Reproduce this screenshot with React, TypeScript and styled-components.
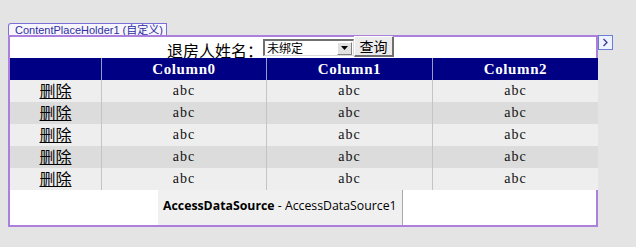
import React from "react";
import styled, { createGlobalStyle } from "styled-components";

const Global = createGlobalStyle`
  html, body { margin: 0; padding: 0; background: #e4e4e4; }
  body { font-family: "Liberation Sans", "Noto Sans CJK SC", sans-serif; }
`;

const Page = styled.div`
  width: 636px;
  height: 247px;
  padding: 23px 0 0 8px;
  box-sizing: border-box;
`;

const Tab = styled.div`
  display: flex;
  align-items: center;
  width: fit-content;
  height: 10px;
  padding: 1px 3px 0 6px;
  border: 1px solid #7a6fd6;
  border-bottom: none;
  border-top-left-radius: 3px;
  background: #f7f6ff;
  font-family: "Liberation Sans", "Noto Sans CJK SC", sans-serif;
  font-size: 11px;
  line-height: 10px;
  color: #2f2fa0;
  white-space: nowrap;
`;

const FrameRow = styled.div`
  display: flex;
  align-items: flex-start;
`;

const Frame = styled.div`
  width: 586px;
  border: 2px solid #ac7fdc;
  background: #ffffff;
  display: flex;
  flex-direction: column;
`;

const Arrow = styled.div`
  width: 15px;
  height: 15px;
  border: 1px solid #6b7fd0;
  background: #eef1ff;
  display: flex;
  align-items: center;
  justify-content: center;
  box-sizing: border-box;
`;

const SearchRow = styled.div`
  height: 21px;
  display: flex;
  align-items: flex-end;
  padding-left: 157px;
`;

const Label = styled.span`
  font-family: "Noto Sans CJK SC", sans-serif;
  font-size: 16px;
  line-height: 18px;
  color: #000;
  width: 96px;
  white-space: nowrap;
  margin-bottom: -1px;
`;

const Select = styled.div`
  align-self: flex-start;
  margin-top: 2px;
  width: 91px;
  height: 17px;
  box-sizing: border-box;
  border-top: 2px solid #707070;
  border-left: 2px solid #707070;
  border-right: 1px solid #d8d8d8;
  border-bottom: 1px solid #d8d8d8;
  background: #fff;
  display: flex;
  align-items: center;
  font-family: "Noto Sans CJK SC", sans-serif;
  font-size: 12px;
  color: #000;
`;

const SelectText = styled.span`
  flex: 1;
  padding-left: 2px;
  line-height: 14px;
`;

const DropBtn = styled.span`
  width: 15px;
  height: 13px;
  margin-right: 1px;
  background: #e0e0e0;
  border-top: 1px solid #fff;
  border-left: 1px solid #fff;
  border-right: 1px solid #808080;
  border-bottom: 1px solid #808080;
  box-sizing: border-box;
  display: flex;
  align-items: center;
  justify-content: center;
`;

const Button = styled.div`
  align-self: flex-start;
  margin-top: -1px;
  width: 40px;
  height: 21px;
  box-sizing: border-box;
  background: #ececec;
  border-top: 1px solid #ffffff;
  border-left: 1px solid #ffffff;
  border-right: 2px solid #707070;
  border-bottom: 2px solid #707070;
  display: flex;
  align-items: center;
  justify-content: center;
  font-family: "Noto Sans CJK SC", sans-serif;
  font-size: 14px;
  color: #000;
`;

const Table = styled.table`
  border-collapse: collapse;
  width: 585px;
  table-layout: fixed;
`;

const Th = styled.th<{ $w: number }>`
  width: ${(p) => p.$w}px;
  height: 22px;
  padding: 0;
  background: #000084;
  color: #fff;
  font-family: "Liberation Serif", serif;
  font-weight: bold;
  font-size: 15px;
  letter-spacing: 0.6px;
  text-align: center;
  border-left: 1px solid #9a9ac8;
  &:first-child { border-left: none; }
`;

const Tr = styled.tr<{ $alt: boolean }>`
  background: ${(p) => (p.$alt ? "#dcdcdc" : "#eeeeee")};
`;

const Td = styled.td`
  height: 22px;
  padding: 0;
  text-align: center;
  font-family: "Liberation Serif", serif;
  font-weight: normal;
  font-size: 14px;
  letter-spacing: 1px;
  color: #111;
  border-left: 1px solid #c4c4c4;
  &:first-child { border-left: none; letter-spacing: 0; }
`;

const Del = styled.a`
  font-family: "Noto Sans CJK SC", sans-serif;
  font-size: 16px;
  line-height: 18px;
  color: #000;
  text-decoration: underline;
  cursor: pointer;
`;

const Footer = styled.div`
  height: 35px;
  padding-left: 148px;
  display: flex;
`;

const DsBox = styled.div`
  width: 245px;
  background: #f0f0f0;
  border-right: 1px solid #a8a8a8;
  box-sizing: border-box;
  display: flex;
  align-items: center;
  padding-left: 5px;
  padding-bottom: 5px;
  font-family: "Open Sans", "Liberation Sans", sans-serif;
  font-size: 12.3px;
  color: #000;
  white-space: nowrap;
`;

const Bold = styled.b`
  font-weight: bold;
`;

const cols = [
  { name: "", w: 91 },
  { name: "Column0", w: 164 },
  { name: "Column1", w: 165 },
  { name: "Column2", w: 165 },
];

export default function App() {
  return (
    <>
      <Global />
      <Page>
        <Tab>ContentPlaceHolder1 (自定义)</Tab>
        <FrameRow>
          <Frame>
            <SearchRow>
              <Label>退房人姓名：</Label>
              <Select>
                <SelectText>未绑定</SelectText>
                <DropBtn>
                  <svg width="7" height="4" viewBox="0 0 7 4">
                    <path d="M0 0H7L3.5 4Z" fill="#000" />
                  </svg>
                </DropBtn>
              </Select>
              <Button>查询</Button>
            </SearchRow>
            <Table>
              <thead>
                <tr>
                  {cols.map((c, i) => (
                    <Th key={i} $w={c.w}>
                      {c.name}
                    </Th>
                  ))}
                </tr>
              </thead>
              <tbody>
                {[0, 1, 2, 3, 4].map((r) => (
                  <Tr key={r} $alt={r % 2 === 1}>
                    <Td>
                      <Del>删除</Del>
                    </Td>
                    <Td>abc</Td>
                    <Td>abc</Td>
                    <Td>abc</Td>
                  </Tr>
                ))}
              </tbody>
            </Table>
            <Footer>
              <DsBox>
                <Bold>AccessDataSource</Bold>&nbsp;- AccessDataSource1
              </DsBox>
            </Footer>
          </Frame>
          <Arrow>
            <svg width="7" height="9" viewBox="0 0 7 9">
              <path d="M1.5 1L5 4.5L1.5 8" stroke="#3a3a90" strokeWidth="1.3" fill="none" />
            </svg>
          </Arrow>
        </FrameRow>
      </Page>
    </>
  );
}
